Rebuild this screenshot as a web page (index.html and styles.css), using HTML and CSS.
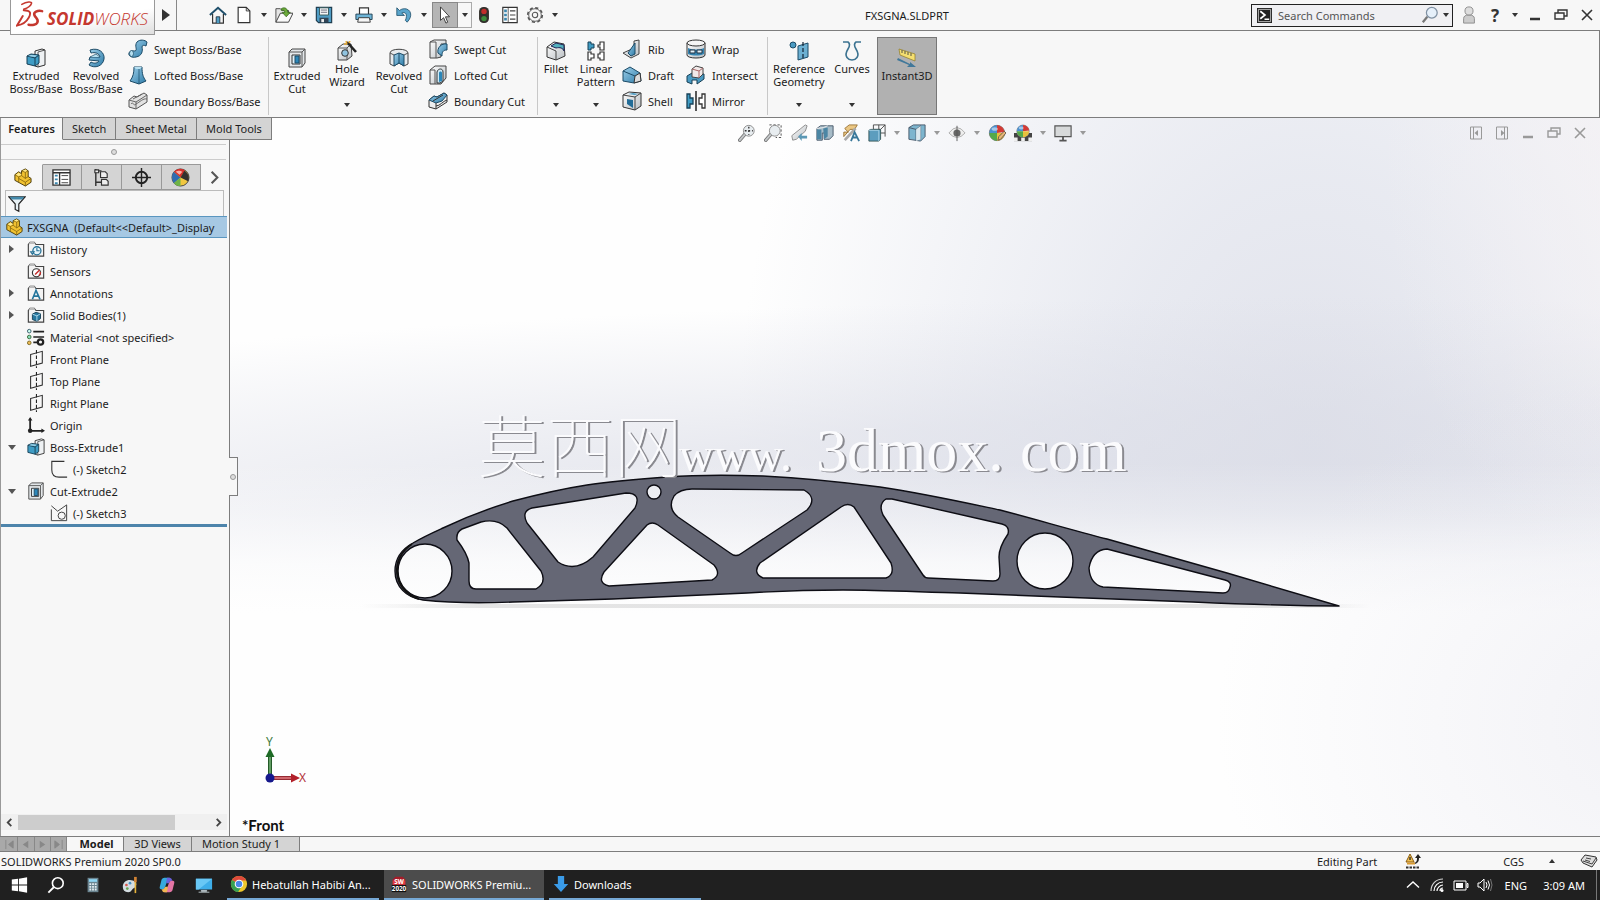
FILE: index.html
```html
<!DOCTYPE html>
<html lang="en">
<head>
<meta charset="utf-8">
<title>FXSGNA.SLDPRT - SOLIDWORKS Premium 2020</title>
<link rel="stylesheet" href="styles.css">
</head>
<body>
<svg class="defs" aria-hidden="true">
  <defs>
    <linearGradient id="blue" x1="0" y1="0" x2="1" y2="1"><stop offset="0" stop-color="#9fd0ea"/><stop offset="1" stop-color="#2c7ba8"/></linearGradient>
    <linearGradient id="steel" x1="0" y1="0" x2="1" y2="1"><stop offset="0" stop-color="#fff"/><stop offset="1" stop-color="#b9bec2"/></linearGradient>
    <symbol id="i-part" viewBox="0 0 20 20"><path d="M2 7 6 4l3 2V3l4-2 3 2v6l3 2v4l-6 4-11-6Z" fill="#f2c230" stroke="#4a3a08" stroke-linejoin="round"/><path d="m2 7 4 2.500L9 8V6M6 9.500V15M9 8l4 3V4.500L9 3M13 4.500 16 3M13 11l3-2M13 19v-4L6 11M13 15l6-4" fill="none" stroke="#7b5e0c" stroke-width=".8"/><path d="m3 7 3-2 3 2-3 1.500ZM10 3l3-1.500L15 3l-2 1Z" fill="#ffe98a"/></symbol>
    <symbol id="i-extrude" viewBox="0 0 20 20"><path d="M9 3 16 1l3 1v15l-7 2-3-1Z" fill="#eef1f3" stroke="#333"/><path d="M12 4v15M12 4l7-2" fill="none" stroke="#555"/><path d="m1 8 4-2 8 1v8l-4 3-8-2Z" fill="#3f9cc4" stroke="#173f55"/><path d="m1 8 8 2 4-3M9 10v8" fill="none" stroke="#173f55"/><path d="m2 8 3-1 6 .5L9 9Z" fill="#a5d6ea"/></symbol>
    <symbol id="i-excut" viewBox="0 0 20 20"><path d="M2 4 5 1h13v14l-3 4H2Z" fill="#e3e7ea" stroke="#444"/><path d="M2 4h13v15M15 4l3-3" fill="none" stroke="#555"/><path d="M5 7h8v9H5Z" fill="#dff0f8" stroke="#333"/><path d="m8 8 4 0v7H8Z" fill="#2c87b9" stroke="#1b4a66"/></symbol>
    <symbol id="i-folder" viewBox="0 0 20 20"><path d="M1.500 18V5l2-2.500H8L10 5h8.500v13Z" fill="#f3f3f3" stroke="#444" stroke-width="1.300"/><path d="M2 4.500 3.500 2H8l1 2.500Z" fill="#bbb"/></symbol>
    <symbol id="i-plane" viewBox="0 0 20 20"><path d="M4 5 17 1.500v13L4 18Z" fill="none" stroke="#333" stroke-width="1.200"/><path d="M10.500 0v20" stroke="#222" stroke-width="1.200" stroke-dasharray="4 2"/></symbol>
    <symbol id="i-lens" viewBox="0 0 20 20"><path d="m2 18 6-7" stroke="#777" stroke-width="4" stroke-linecap="round"/><path d="m2 18 6-7" stroke="#c4c8ca" stroke-width="2" stroke-linecap="round"/><circle cx="12" cy="7.500" r="6" fill="#e8edf0" stroke="#888"/></symbol>
    <symbol id="i-restore" viewBox="0 0 14 14"><path d="M4 4.500V2h9v6h-3M1 5h9v6H1Z" fill="none" stroke="currentColor" stroke-width="1.400"/></symbol>
    <symbol id="i-close" viewBox="0 0 14 14"><path d="m2 2 10 10M12 2 2 12" stroke="currentColor" stroke-width="1.600"/></symbol>
    <symbol id="i-min" viewBox="0 0 14 14"><path d="M2 11h10" stroke="currentColor" stroke-width="2.500"/></symbol>
    <symbol id="i-ball" viewBox="0 0 20 20"><circle cx="10" cy="10" r="8.500" fill="#eee" stroke="#666"/><path d="M10 10V1.500A8.500 8.500 0 0 0 1.500 10Z" fill="#4a90d0"/><path d="M10 10V1.500A8.500 8.500 0 0 1 18.500 9Z" fill="#d33a35"/><path d="M1.500 10a8.500 8.500 0 0 0 8.500 8.500V10Z" fill="#55a94a"/><path d="M10 10h8.500a8.500 8.500 0 0 1-8.500 8.500Z" fill="#e8c23c"/><ellipse cx="7.500" cy="5.500" rx="3.500" ry="2" fill="#fff" opacity=".5"/></symbol>
  </defs>
</svg>

<header class="titlebar">
  <div class="brand">
    <svg class="brand-mark" viewBox="0 0 30 30" aria-hidden="true"><g fill="none" stroke="#c5382f" stroke-linecap="round"><path d="M6 4c5-3 11-3 10-1-1 3-5 5-8 6" stroke-width="1.600"/><path d="M8 10c7 0 8 3 5 8-2 4-7 7-12 8l6-10" stroke-width="2"/><path d="M27 11c-5-1-9 1-8 4 1 3 5 4 3 8-1 2-5 3-9 2" stroke-width="2.600"/></g></svg>
    <span class="brand-name"><b>SOLID</b>WORKS</span>
  </div>
  <button class="menu-arrow" aria-label="Expand menu"></button>
  <nav class="quick" aria-label="Quick access">
    <button class="tool home" aria-label="Home"><svg viewBox="0 0 20 20"><path d="M4 9v10h12V9" fill="#f4f4f4" stroke="#333" stroke-width="1.300"/><path d="M1 10 10 2l9 8" fill="none" stroke="#1f4f6b" stroke-width="2.200"/><path d="M8 19v-7h4v7" fill="#4d9dc4" stroke="#234"/></svg></button>
    <button class="tool" aria-label="New"><svg viewBox="0 0 20 20"><path d="M3.500 1.500h9l4 4v13h-13Z" fill="#fff" stroke="#333" stroke-width="1.300"/><path d="M12.500 1.500v4h4" fill="none" stroke="#333"/></svg></button><button class="drop" aria-label="New options"></button>
    <button class="tool" aria-label="Open"><svg viewBox="0 0 20 20"><path d="M1 18V3h5l2 2h7v4" fill="#e6e6e6" stroke="#444"/><path d="m1 18 5-10h14l-5 10Z" fill="#fafafa" stroke="#333"/><path d="M7 3c3-2 7-1 7 4h3l-4.500 5L8 7h3c0-2-2-3-4-2Z" fill="#6cab3b" stroke="#2f5f17" stroke-width=".8"/></svg></button><button class="drop" aria-label="Open options"></button>
    <button class="tool" aria-label="Save"><svg viewBox="0 0 20 20"><path d="M1.500 1.500h17v17H4l-2.500-2.500Z" fill="#4f9cc4" stroke="#1f3d4f" stroke-width="1.300"/><path d="M5 2h10v8H5Z" fill="#f4f6f7" stroke="#355"/><path d="M6.500 4.500h7M6.500 7h7" stroke="#667"/><path d="M5 18v-5h10v5Z" fill="#345"/><path d="M7 14.500h3V18H7Z" fill="#eee"/></svg></button><button class="drop" aria-label="Save options"></button>
    <button class="tool" aria-label="Print"><svg viewBox="0 0 20 20"><path d="M5 9V2h10v7" fill="#fff" stroke="#333" stroke-width="1.300"/><path d="M1 9h18v6H1Z" fill="#6eb4d6" stroke="#1f3d4f"/><path d="M4 13h12l1 5H3Z" fill="#f6f6f6" stroke="#333"/></svg></button><button class="drop" aria-label="Print options"></button>
    <button class="tool" aria-label="Undo"><svg viewBox="0 0 20 20"><path d="M2 2v8.500h8.500L7.500 8c4-2 7 1 4 8l2 2c7-7 4-15-3-15-2 0-4 .8-5.500 2Z" fill="#5aa5cc" stroke="#1f4f6b" stroke-width=".9"/></svg></button><button class="drop" aria-label="Undo options"></button>
    <button class="tool select" aria-label="Select"><svg viewBox="0 0 20 20"><path d="M5 1v15l3.500-3 2.500 6 2-1-2.500-6H15Z" fill="#fff" stroke="#333"/></svg></button><button class="drop select-drop" aria-label="Select options"></button>
    <button class="tool" aria-label="Rebuild"><svg viewBox="0 0 20 20"><rect x="4.500" y="1" width="11" height="18" rx="5" fill="#32302c"/><circle cx="10" cy="6" r="3" fill="#c22d2a"/><circle cx="10" cy="14" r="3" fill="#3d8d3c"/></svg></button>
    <button class="tool list" aria-label="File properties"><svg viewBox="0 0 20 20"><path d="M2 1.500h16v17H2Z" fill="#fff" stroke="#333" stroke-width="1.300"/><path d="M8 2v16" stroke="#555"/><path d="M3.500 4h3v3h-3Zm0 4.500h3v3h-3Zm0 4.500h3v3h-3Z" fill="#3c87ae"/><path d="M10 5.500h6M10 10h6M10 14.500h6" stroke="#444" stroke-width="1.300"/></svg></button>
    <button class="tool" aria-label="Options"><svg viewBox="0 0 20 20"><circle cx="10" cy="10" r="8" fill="none" stroke="#555" stroke-width="2" stroke-dasharray="3.500 2.780"/><circle cx="10" cy="10" r="7" fill="#f7f7f7" stroke="#555"/><circle cx="10" cy="10" r="3" fill="none" stroke="#555" stroke-width="1.200"/></svg></button><button class="drop" aria-label="Options menu"></button>
  </nav>
  <h1 class="doc-title">FXSGNA.SLDPRT</h1>
  <div class="title-right">
    <label class="search">
      <svg viewBox="0 0 16 16" aria-hidden="true"><path d="M0 0h16v16H0Z" fill="#222"/><path d="M1.500 1.500h13v13h-13Z" fill="none" stroke="#ddd" stroke-width=".8"/><path d="m3.500 3.500 5 4-5 4M8 12h5" fill="none" stroke="#fff" stroke-width="1.800"/></svg>
      <input type="search" placeholder="Search Commands" aria-label="Search Commands">
      <svg class="glass" viewBox="0 0 20 20" aria-hidden="true"><path d="m2 18 5-6" stroke="#777" stroke-width="2.500"/><circle cx="12" cy="7.500" r="6" fill="#e6f0fa" stroke="#8091a3" stroke-width="1.400"/></svg>
      <button class="drop" aria-label="Search options"></button>
    </label>
    <button class="tool user" aria-label="Sign in"><svg viewBox="0 0 20 20"><path d="M4 19v-5q0-4 6-4t6 4v5Z" fill="#ccc" stroke="#888"/><circle cx="10" cy="5.500" r="4.500" fill="#ddd" stroke="#888"/></svg></button>
    <button class="help" aria-label="Help">?</button><button class="drop" aria-label="Help options"></button>
    <button class="win" aria-label="Minimize"><svg><use href="#i-min"/></svg></button>
    <button class="win" aria-label="Restore"><svg><use href="#i-restore"/></svg></button>
    <button class="win" aria-label="Close"><svg><use href="#i-close"/></svg></button>
  </div>
</header>

<section class="ribbon" aria-label="Features commands">
  <div class="group g-boss">
    <button class="big w60 low"><svg><use href="#i-extrude"/></svg><span>Extruded<br>Boss/Base</span></button>
    <button class="big w60 low"><svg viewBox="0 0 20 20"><path d="M4 2c9-3 15 3 14 9-1 7-9 10-15 6l2-3c3 2 7 1 8-1L3 12l1-3h10c-1-4-5-5-9-4Z" fill="url(#blue)" stroke="#1b4a66"/><path d="m4 9 6-3 4 3" fill="#b7e0f1" stroke="#1b4a66" stroke-width=".7"/></svg><span>Revolved<br>Boss/Base</span></button>
    <div class="stack">
      <button class="small"><svg viewBox="0 0 20 20"><path d="M9 3c3-3 8-2 10 0l-1 4c-2-1-4-1-4 1 1 4 0 9-6 10-4 1-8-1-7-4s5-2 6-2c3-1-1-5 2-9Z" fill="url(#blue)" stroke="#1b4a66"/><ellipse cx="3.500" cy="14.500" rx="2" ry="3" fill="#b7e0f1" stroke="#1b4a66" stroke-width=".7"/></svg>Swept Boss/Base</button>
      <button class="small"><svg viewBox="0 0 20 20"><path d="M6 2h8c0 7 1 10 4 14l-7 3-9-3C5 12 6 8 6 2Z" fill="url(#blue)" stroke="#1b4a66"/><path d="M6 2h8l-2 2H8Z" fill="#b7e0f1"/><path d="M11 4v15" stroke="#1b4a66" stroke-width=".7"/></svg>Lofted Boss/Base</button>
      <button class="small"><svg viewBox="0 0 20 20"><path d="M1 9 6 5l3 1 7-4 3 2v7L8 18l-7-2Z" fill="#e2e2e2" stroke="#555"/><path d="m1 9 7 2 11-7M8 11v7M5 8l9-5M3 13c2-3 3 3 5 0 4-2 7-6 11-5" fill="none" stroke="#666"/></svg>Boundary Boss/Base</button>
    </div>
  </div>
  <div class="group g-cut">
    <button class="big w50 low"><svg><use href="#i-excut"/></svg><span>Extruded<br>Cut</span></button>
    <button class="big w50 caret"><svg viewBox="0 0 20 20"><path d="m1 7 5-4h8l1 12-5 4H1Z" fill="url(#steel)" stroke="#444"/><path d="M1 7h9v12M10 7l4-4" fill="none" stroke="#555"/><circle cx="8" cy="12" r="3.300" fill="#8fc3df" stroke="#333"/><path d="m10 1 9 10" stroke="#222" stroke-width="2.600"/><path d="m9 0 1 3M13 0l-1 2M7 3l3 0" stroke="#e4a936" stroke-width="1.500"/></svg><span>Hole<br>Wizard</span></button>
    <button class="big w54 low"><svg viewBox="0 0 20 20"><path d="M1 5c0-5 18-5 18 0v11l-4 2-5-3-5 3-4-2Z" fill="#e6eaed" stroke="#444"/><path d="m5 7 5-2 5 2v11l-5-3-5 3Z" fill="url(#blue)" stroke="#1b4a66"/><path d="M10 5v10" stroke="#1b4a66"/><path d="m1 5 4 2M19 5l-4 2" stroke="#555"/></svg><span>Revolved<br>Cut</span></button>
    <div class="stack">
      <button class="small"><svg viewBox="0 0 20 20"><path d="m2 3 4-2h12v4h-5v13l-4 1H2Z" fill="url(#steel)" stroke="#444"/><path d="M2 3h6v16" fill="none" stroke="#555"/><path d="M19 5c-6-1-10 4-9 9l4 3c0-4 1-6 5-6Z" fill="url(#blue)" stroke="#1b4a66"/></svg>Swept Cut</button>
      <button class="small"><svg viewBox="0 0 20 20"><path d="m2 5 5-4h11v12l-5 6H2Z" fill="url(#steel)" stroke="#444"/><path d="M2 5h5v14" fill="none" stroke="#555"/><path d="M9 7c1-4 6-4 6 0v9l-3 2H9Z" fill="#cfe9f5" stroke="#333"/><path d="M11 8c0-2 3-2 3 0v8l-3 1Z" fill="#2c87b9"/></svg>Lofted Cut</button>
      <button class="small"><svg viewBox="0 0 20 20"><path d="M1 9 6 5l3 1 7-4 3 2v7L8 18l-7-2Z" fill="#eee" stroke="#333"/><path d="m1 9 5-4 3 1 7-4 3 2-5 6-6 2Z" fill="url(#blue)" stroke="#1b4a66"/><path d="M8 12v6M5 10l10-6M8 15c4 0 7-5 11-6" fill="none" stroke="#333"/></svg>Boundary Cut</button>
    </div>
  </div>
  <div class="group g-mod">
    <button class="big w36 caret"><svg viewBox="0 0 20 20"><path d="M1 6 8 1l10 2 1 12-9 4-9-3Z" fill="url(#steel)" stroke="#333"/><path d="M10 19V10L1 6" fill="none" stroke="#444"/><path d="m5 5 5-3 8 2v6c-1-3-4-4-8-3Z" fill="#53b0bd" stroke="#225"/></svg><span>Fillet</span></button>
    <button class="big w44 caret"><svg viewBox="0 0 20 20"><g fill="#fff" stroke="#333" stroke-width="1.200"><path d="M12 4h2V1h4v8h-4V6h-2ZM2 11h3v2h3v4H5v2H2ZM12 13h2v-2h4v8h-4v-2h-2Z"/></g><path d="M2 1h3v2h3v4H5v2H2Z" fill="#3f9cc4" stroke="#173f55"/></svg><span>Linear<br>Pattern</span></button>
    <div class="stack w64">
      <button class="small"><svg viewBox="0 0 20 20"><path d="m1 14 11-5V2l5-1v14l-8 4Z" fill="url(#steel)" stroke="#444"/><path d="m6 14 7-10v11l-4 2Z" fill="url(#blue)" stroke="#1b4a66"/></svg>Rib</button>
      <button class="small"><svg viewBox="0 0 20 20"><path d="m1 6 7-4 10 6 1 8-7 2-11-2Z" fill="url(#blue)" stroke="#1b4a66"/><path d="m12 18 1-7 5-3 1 8Z" fill="#ddd" stroke="#333"/><path d="m1 6 12 5" stroke="#1b4a66"/></svg>Draft</button>
      <button class="small"><svg viewBox="0 0 20 20"><path d="m1 4 6-3 12 1v13l-6 4-12-3Z" fill="url(#steel)" stroke="#333"/><path d="M13 19V6L1 4M13 6l6-4" fill="none" stroke="#444"/><path d="m5 8 6 1v8l-6-4Z" fill="#226c97"/><path d="m6 3 7 1 3-1-5-1Z" fill="#4d9dc4"/></svg>Shell</button>
    </div>
    <div class="stack">
      <button class="small"><svg viewBox="0 0 20 20"><path d="M1 4v12c0 4 18 4 18 0V4" fill="url(#steel)" stroke="#333"/><ellipse cx="10" cy="4" rx="9" ry="3" fill="#f6f6f6" stroke="#333"/><path d="M2 9c5 2 11 2 16 0v6c-5 2-11 2-16 0Z" fill="#3584b0"/><path d="M4 11h5v3H4ZM11 11h5v3h-5Z" fill="#e4f2f8" stroke="#234"/></svg>Wrap</button>
      <button class="small"><svg viewBox="0 0 20 20"><path d="M1 11 6 8l12 1v5l-7 5v-4H6v4l-5-2Z" fill="#4a9ac2" stroke="#173f55"/><path d="m6 4 4-3 7 2v6l-4 4-7-1Z" fill="#f1e9e9" stroke="#444"/><path d="m6 4 7 2 4-3M13 6v7" fill="none" stroke="#a66"/></svg>Intersect</button>
      <button class="small"><svg viewBox="0 0 20 20"><path d="M1 3h3v4h3v6H4v4H1Z" fill="#3f9cc4" stroke="#173f55" stroke-width="1.300"/><path d="M19 3h-3v4h-3v6h3v4h3Z" fill="#fff" stroke="#333" stroke-width="1.300"/><path d="M10 0v20" stroke="#222" stroke-width="1.500"/></svg>Mirror</button>
    </div>
  </div>
  <div class="group g-ref">
    <button class="big w62 caret"><svg viewBox="0 0 20 20"><circle cx="4" cy="4" r="3" fill="#4a9ac2" stroke="#1b4a66"/><path d="m9 5 10-3v14L9 19Z" fill="#6cb0d2" stroke="#1b4a66"/><path d="M14 1v18" stroke="#123" stroke-width="1.200" stroke-dasharray="4 2"/></svg><span>Reference<br>Geometry</span></button>
    <button class="big w44 caret"><svg viewBox="0 0 20 20"><path d="M1 1h5q3 2 0 7c-5 8 1 11 4 11s9-3 4-11q-3-5 0-7h5" fill="none" stroke="#3c7391" stroke-width="1.600"/></svg><span>Curves</span></button>
    <button class="big instant low" aria-pressed="true"><svg viewBox="0 0 20 20"><path d="m2 1 16 5v7L3 7Z" fill="#f5df71" stroke="#8d7924" stroke-width=".7"/><path d="M5 2v3M8 3v3M11 4v3M14 5v3" stroke="#554"/><path d="m1 10 12 6v-2l6 5h-9l2-2L0 12Z" fill="#41789a"/></svg><span>Instant3D</span></button>
  </div>
</section>

<main class="work">
  <aside class="side">
    <nav class="cmd-tabs" aria-label="Command tabs">
      <button class="cmd on">Features</button><button class="cmd">Sketch</button><button class="cmd">Sheet Metal</button><button class="cmd">Mold Tools</button>
    </nav>
    <div class="grip"><i></i></div>
    <nav class="mgr" aria-label="Manager tabs">
      <button class="on" aria-label="Feature tree"><svg><use href="#i-part"/></svg></button>
      <button aria-label="Property manager"><svg viewBox="0 0 20 20"><path d="M1 2h18v16H1Z" fill="#fff" stroke="#333" stroke-width="1.400"/><path d="M1 5h18M8 5v13" stroke="#333" stroke-width="1.400"/><path d="M3 7h3v2H3Zm0 4h3v2H3Zm0 4h3v2H3Z" fill="#3c87ae"/><path d="M10 8h7M10 12h7M10 15.500h7" stroke="#444"/></svg></button>
      <button aria-label="Configurations"><svg viewBox="0 0 20 20"><path d="M4 1v18M4 3h6M4 15h6" fill="none" stroke="#333" stroke-width="1.500"/><path d="M3 2h4v3H3ZM9 4h5l2 2v4H9ZM10 12h5l2 2v4h-7Z" fill="#eee" stroke="#333" stroke-width="1.200"/></svg></button>
      <button aria-label="Dimensions"><svg viewBox="0 0 20 20"><circle cx="10" cy="10" r="6" fill="none" stroke="#222" stroke-width="2"/><path d="M10 0v20M0 10h20" stroke="#222" stroke-width="1.500"/></svg></button>
      <button aria-label="Display manager"><svg viewBox="0 0 20 20"><circle cx="10" cy="10" r="9" fill="#f1c740" stroke="#444"/><path d="M10 10 3 4c-3 4-2 9 0 12Z" fill="#2e6cb2"/><path d="M10 10 3 4c4-4 9-4 12-1Z" fill="#d6302c"/><path d="m10 10 4-7c4 2 6 7 4 11Z" fill="#32302f"/><path d="m10 10-7 6c2 2 4 3 7 3Z" fill="#6eb348"/><path d="M5 4c3-2 5-1 7 0l-3 3Z" fill="#f9b0a6"/></svg></button>
      <button class="more" aria-label="More tabs"><svg viewBox="0 0 20 20"><path d="m7 4 6 6-6 6" fill="none" stroke="#555" stroke-width="2.200"/></svg></button>
    </nav>
    <label class="filter"><svg viewBox="0 0 20 20" aria-hidden="true"><path d="M1 2h18l-7 8v8l-4-2v-6Z" fill="#e8f1f5" stroke="#222" stroke-width="1.300"/><path d="M2 2h16l-2 3H4Z" fill="#4288a9"/></svg><input type="text" aria-label="Filter tree"></label>
    <div class="tree">
      <div class="row root"><svg><use href="#i-part"/></svg><span>FXSGNA&nbsp; (Default&lt;&lt;Default&gt;_Display</span></div>
      <ul>
        <li class="row"><button class="tw" aria-label="Expand"></button><svg viewBox="0 0 20 20"><use href="#i-folder"/><circle cx="11" cy="12" r="4.500" fill="#e5f4fa" stroke="#277297" stroke-width="1.400"/><path d="M11 9v3h3M4 13h4l-2 3Z" fill="none" stroke="#277297" stroke-width="1.200"/></svg><span>History</span></li>
        <li class="row"><i class="tw-gap"></i><svg viewBox="0 0 20 20"><use href="#i-folder"/><circle cx="10.500" cy="12" r="4.500" fill="#fff" stroke="#333" stroke-width="1.300"/><path d="m9 14 5-5" stroke="#c62e2b" stroke-width="1.600"/><path d="M13 15c2-1 2-3 2-4" stroke="#c62e2b" fill="none" stroke-width="1.500"/></svg><span>Sensors</span></li>
        <li class="row"><button class="tw" aria-label="Expand"></button><svg viewBox="0 0 20 20"><use href="#i-folder"/><path d="m6 17 4-10 4.500 10M7.500 13.500h5" fill="none" stroke="#24759c" stroke-width="1.800"/></svg><span>Annotations</span></li>
        <li class="row"><button class="tw" aria-label="Expand"></button><svg viewBox="0 0 20 20"><use href="#i-folder"/><path d="m6 9 4-2 5 1.500V14l-4 3-5-2Z" fill="#26779f" stroke="#173f55"/><path d="m6 9 5 2 4-2.500M11 11v6" stroke="#b7e0f1" fill="none"/></svg><span>Solid Bodies(1)</span></li>
        <li class="row"><i class="tw-gap"></i><svg viewBox="0 0 20 20"><path d="M7 4h12M7 10h12M7 16h5" stroke="#222" stroke-width="1.800"/><circle cx="2.500" cy="3.500" r="2" fill="#cfe" stroke="#356"/><circle cx="2.500" cy="10" r="2" fill="#8db" stroke="#363"/><circle cx="2.500" cy="16.500" r="2" fill="#eb5" stroke="#762"/><circle cx="15" cy="15.500" r="3" fill="none" stroke="#222" stroke-width="2.500"/></svg><span>Material &lt;not specified&gt;</span></li>
        <li class="row"><i class="tw-gap"></i><svg><use href="#i-plane"/></svg><span>Front Plane</span></li>
        <li class="row"><i class="tw-gap"></i><svg><use href="#i-plane"/></svg><span>Top Plane</span></li>
        <li class="row"><i class="tw-gap"></i><svg><use href="#i-plane"/></svg><span>Right Plane</span></li>
        <li class="row"><i class="tw-gap"></i><svg viewBox="0 0 20 20"><path d="M3.500 3v13.500H17" fill="none" stroke="#222" stroke-width="2"/><path d="M1 5l2.500-4L6 5ZM16 14l4 2.500-4 2.500Z" fill="#222"/><circle cx="3.500" cy="16.500" r="2.500" fill="#222"/></svg><span>Origin</span></li>
        <li class="row"><button class="tw open" aria-label="Collapse"></button><svg><use href="#i-extrude"/></svg><span>Boss-Extrude1</span></li>
        <li class="row child"><svg viewBox="0 0 20 20"><path d="M16 1.500H2V11q0 8 8 8h9" fill="none" stroke="#333" stroke-width="1.200"/></svg><span>(-) Sketch2</span></li>
        <li class="row"><button class="tw open" aria-label="Collapse"></button><svg><use href="#i-excut"/></svg><span>Cut-Extrude2</span></li>
        <li class="row child"><svg viewBox="0 0 20 20"><path d="M1.500 6v12.500h17V1l-10 7-7-6" fill="none" stroke="#444" stroke-width="1.100"/><circle cx="13" cy="13" r="4" fill="none" stroke="#444" stroke-width="1.100"/></svg><span>(-) Sketch3</span></li>
      </ul>
      <div class="rollback"></div>
    </div>
    <div class="hscroll"><button aria-label="Scroll left"><svg viewBox="0 0 10 10"><path d="M7 1 3 5l4 4" fill="none" stroke="#444" stroke-width="2"/></svg></button><div class="track"><div class="thumb"></div></div><button aria-label="Scroll right"><svg viewBox="0 0 10 10"><path d="m3 1 4 4-4 4" fill="none" stroke="#444" stroke-width="2"/></svg></button></div>
    <button class="splitter" aria-label="Collapse panel"><i></i></button>
  </aside>

  <section class="view" aria-label="Graphics area">
    <svg class="scene" viewBox="230 118 1370 718" preserveAspectRatio="xMidYMid slice" role="img" aria-label="Wing rib part">
      <defs>
        <linearGradient id="floor" x1="0" x2="1"><stop offset="0" stop-color="#ccc" stop-opacity="0"/><stop offset=".12" stop-color="#ccc" stop-opacity=".5"/><stop offset=".9" stop-color="#ccc" stop-opacity=".5"/><stop offset="1" stop-color="#ccc" stop-opacity="0"/></linearGradient>
      </defs>
      <rect x="360" y="604" width="1010" height="4" fill="url(#floor)"/>
      <path class="rib" fill-rule="evenodd" d="M395 571C395 558 402 549 413 543C423 537 432 533 443 528C466 517 490 508 513 501C536 495 561 489 587 485C613 481 640 479 667 477C695 475 730 475 763 476C802 478 842 482 880 487C921 493 962 502 1000 510C1038 520 1072 530 1107 539L1227 573L1339 606C1310 606 1240 604 1193 602L1060 597L960 593C920 592 880 590 843 590C810 590 780 591 747 593L613 599L513 602C490 603 450 603 423 600C406 598 395 586 395 571Z
        M398 571a27 27 0 1 0 54 0a27 27 0 1 0-54 0Z
        M457 540Q456 532 462 529L481 522Q497 518 507 528L541 571Q547 583 536 589H476Q469 589 469 581V563Q467 553 457 540Z
        M527 523Q521 511 532 508L626 493Q642 493 635 508L593 557Q575 573 558 562Z
        M647 525Q652 521 658 525L714 565Q722 575 712 580L609 586Q597 583 604 572Z
        M647 492a7 7 0 1 0 14 0a7 7 0 1 0-14 0Z
        M678 517Q667 508 674 496Q680 489 692 489L804 490Q818 498 807 510L742 553Q736 558 730 553Z
        M760 563L841 507Q848 502 854 507L891 563Q895 575 886 578L763 578Q752 573 760 563Z
        M883 515Q878 504 886 499L892 499L1002 524Q1010 526 1008 534Q999 547 999 557L1000 574Q1000 581 993 581L928 578Q925 578 923 575Z
        M1017 561a28 28 0 1 0 56 0a28 28 0 1 0-56 0Z
        M1107 549L1225 580Q1232 582 1230 587Q1229 593 1223 593L1103 587Q1090 584 1089 568Q1092 550 1107 549Z"/>
      <path d="M412 544C390 558 392 590 419 599" fill="none" stroke="#111" stroke-width="2"/>
      <g class="mark"><text x="478" y="472" class="mark-cjk">莫西网</text><text y="471" class="mark-latin"><tspan x="679" class="mark-www">www.</tspan><tspan x="816">3dmox.</tspan><tspan x="1020">com</tspan></text></g>
    </svg>
    <nav class="hud" aria-label="View tools">
      <button class="tool" aria-label="Zoom to fit"><svg viewBox="0 0 20 20"><use href="#i-lens"/><path d="M12 3v9M7.500 7.500h9" stroke="#333" stroke-width="1.500" stroke-dasharray="2 2"/></svg></button>
      <button class="tool" aria-label="Zoom to area"><svg viewBox="0 0 20 20"><path d="M6 1h13v14h-6" fill="none" stroke="#444" stroke-dasharray="2.500 2"/><use href="#i-lens"/></svg></button>
      <button class="tool" aria-label="Previous view"><svg viewBox="0 0 20 20"><path d="m2 13 10-8 5-4 2 1-2 6-10 9-4 1Z" fill="url(#steel)" stroke="#888"/><path d="m9 14 4-4v3h6v3h-6v3Z" fill="#5b98b5"/></svg></button>
      <button class="tool" aria-label="Section view"><svg viewBox="0 0 20 20"><path d="m1 5 4-3h14v11l-4 4H9v-7H7v8H1Z" fill="#a7bcc8" stroke="#456"/><path d="m8 5 5-1v10l-4 3ZM1 6h5v11H1Z" fill="#4b86a4"/><path d="m1 5 7-1 5-2" stroke="#eee" fill="none"/></svg></button>
      <button class="tool" aria-label="Dynamic annotation"><svg viewBox="0 0 20 20"><path d="m3 5 5-4h9l-3 5H9l-7 8V9h5Z" fill="#ebc783" stroke="#997235"/><path d="m3 18 12-13" stroke="#aaa" stroke-width="3"/><path d="m10 19 4-10 5 10M11 15h6" fill="none" stroke="#387799" stroke-width="2"/></svg></button>
      <button class="tool" aria-label="View orientation"><svg viewBox="0 0 20 20"><path d="M6 1h13v13M6 1v5M19 1l-5 5M12 1v6M6 6h8M14 10h5" fill="none" stroke="#444"/><path d="m1 7 2-1h11v11l-2 2H1Z" fill="#5c9dbe" stroke="#355"/><path d="M1 7h11v12" fill="none" stroke="#a7d3e6"/></svg></button><button class="drop soft" aria-label="Orientation options"></button>
      <button class="tool" aria-label="Display style"><svg viewBox="0 0 20 20"><path d="m1 4 5-3h13v13l-5 5-13-2Z" fill="#7db5ce" stroke="#456"/><path d="m1 4 8 2v12M9 6l5-4v15" fill="none" stroke="#456"/><path d="m9 6 5-4v15l-5 2Z" fill="#dbe8ee"/></svg></button><button class="drop soft" aria-label="Display options"></button>
      <button class="tool" aria-label="Hide or show items"><svg viewBox="0 0 20 20"><path d="M1 10q9-12 18 0-9 10-18 0Z" fill="#eee" stroke="#aaa"/><circle cx="10" cy="10" r="4" fill="#666"/><path d="M10 2v17" stroke="#555"/></svg></button><button class="drop soft" aria-label="Visibility options"></button>
      <button class="tool" aria-label="Edit appearance"><svg viewBox="0 0 20 20"><use href="#i-ball"/><path d="m11 18 1-4 6-6 2 2-6 7Z" fill="#e8b778" stroke="#654"/></svg></button>
      <button class="tool" aria-label="Apply scene"><svg viewBox="0 0 20 20"><path d="M0 10h20v9H0Z" fill="#444"/><path d="M0 15h4v4H0ZM8 15h4v4H8ZM16 15h4v4h-4Z" fill="#eee"/><use href="#i-ball" x="2" y="0" width="16" height="16"/></svg></button><button class="drop soft" aria-label="Scene options"></button>
      <button class="tool" aria-label="View settings"><svg viewBox="0 0 20 20"><path d="M1 2h18v12H1Z" fill="#d7d9da" stroke="#555" stroke-width="1.300"/><path d="M10 14v4M6 18.500h8" stroke="#555" stroke-width="2"/></svg></button><button class="drop soft" aria-label="Settings options"></button>
    </nav>
    <div class="docwin">
      <button class="win" aria-label="Previous pane"><svg viewBox="0 0 14 14"><path d="M1.500 1h11v12h-11Z" fill="none" stroke="currentColor"/><path d="M4.500 1v12" stroke="currentColor"/><path d="M9 4v6L5.500 7Z" fill="currentColor"/></svg></button>
      <button class="win" aria-label="Next pane"><svg viewBox="0 0 14 14"><path d="M1.500 1h11v12h-11Z" fill="none" stroke="currentColor"/><path d="M9.500 1v12" stroke="currentColor"/><path d="M6 4v6l3.500-3Z" fill="currentColor"/></svg></button>
      <button class="win" aria-label="Minimize document"><svg><use href="#i-min"/></svg></button>
      <button class="win" aria-label="Restore document"><svg><use href="#i-restore"/></svg></button>
      <button class="win" aria-label="Close document"><svg><use href="#i-close"/></svg></button>
    </div>
    <div class="triad">
      <svg viewBox="0 0 50 50" aria-hidden="true"><path d="M10 40V14" stroke="#245a28" stroke-width="4"/><path d="M10 38V14" stroke="#76b577" stroke-width="1.500"/><path d="m5.500 17 4.500-9 4.500 9Z" fill="#1d6a25"/><path d="M12 38h20" stroke="#952a32" stroke-width="4"/><path d="M14 38h18" stroke="#e37b80" stroke-width="1.500"/><path d="m31 33.500 9 4.500-9 4.500Z" fill="#b2202a"/><circle cx="10" cy="38" r="4.500" fill="#16188c"/></svg>
      <span class="ax-y">Y</span><span class="ax-x">X</span>
    </div>
    <div class="view-name">*Front</div>
  </section>
</main>

<nav class="sheets" aria-label="Model tabs">
  <div class="steps">
    <button aria-label="First"><svg viewBox="0 0 12 12"><path d="M2 1v10M10 2 5 6l5 4Z" stroke="#888" fill="#888"/></svg></button><button aria-label="Previous"><svg viewBox="0 0 12 12"><path d="M9 2 3 6l6 4Z" fill="#888"/></svg></button><button aria-label="Next"><svg viewBox="0 0 12 12"><path d="m3 2 6 4-6 4Z" fill="#888"/></svg></button><button aria-label="Last"><svg viewBox="0 0 12 12"><path d="M10 1v10M2 2l5 4-5 4Z" stroke="#888" fill="#888"/></svg></button>
  </div>
  <button class="sheet on">Model</button><button class="sheet s3d">3D Views</button><button class="sheet smo">Motion Study 1</button>
</nav>

<footer class="status">
  <span class="product">SOLIDWORKS Premium 2020 SP0.0</span>
  <span class="mode">Editing Part</span>
  <svg class="rebuild" viewBox="0 0 16 16" aria-hidden="true"><path d="m1 9 4-8 4 8Z" fill="#f1c153" stroke="#8a5d12"/><path d="M5 4v3" stroke="#222" stroke-width="1.300"/><path d="M8 10c4 0 4-3 4-5h-2l3-4 3 4h-2c0 4-2 6-6 6Z" fill="#222"/><path d="M2 10.500h8" stroke="#d99b33" stroke-width="2"/><path d="M1 14.500h13" stroke="#333" stroke-width="2" stroke-dasharray="2.500 1"/></svg>
  <button class="units">CGS<i></i></button>
  <svg class="tag" viewBox="0 0 18 16" aria-hidden="true"><path d="M1 7 5 2l11 2 1 3-5 7-9-4Z" fill="#ddd" stroke="#333"/><path d="m3 8 9 3 4-6M6 5l5 1M5 7l5 1.500" fill="none" stroke="#444"/></svg>
</footer>

<nav class="taskbar" aria-label="Taskbar">
  <button class="tb" aria-label="Start"><svg viewBox="0 0 20 20"><path d="m2 4 7-1v6.500H2ZM10 3l9-1.500v8h-9ZM2 10.500h7V17l-7-1ZM10 10.500h9v8L10 17Z" fill="#fff"/></svg></button>
  <button class="tb" aria-label="Search"><svg viewBox="0 0 20 20"><circle cx="12" cy="8" r="6" fill="none" stroke="#fff" stroke-width="1.800"/><path d="m7.500 12.500-6 6" stroke="#fff" stroke-width="2"/></svg></button>
  <button class="tb" aria-label="Calculator"><svg viewBox="0 0 20 20"><path d="M4 2h12v16H4Z" fill="#6b8591"/><path d="M5.500 3.500h9v3h-9Z" fill="#8ed5f3"/><path d="M6 9h8M6 12h8M6 15h8" stroke="#e4edf2" stroke-width="2" stroke-dasharray="2 1"/></svg></button>
  <button class="tb" aria-label="Paint"><svg viewBox="0 0 20 20"><path d="M2 12C2 6 8 3 13 5c5 1 5 6 2 8-3 1-3 5-7 5s-6-2-6-6Z" fill="#d4dde1"/><circle cx="6" cy="10" r="1.500" fill="#d6574c"/><circle cx="10" cy="8" r="1.500" fill="#4690c5"/><circle cx="7" cy="14" r="1.500" fill="#68a652"/><path d="M16 1v6" stroke="#d28334" stroke-width="3"/><path d="M16 7v12" stroke="#e7b33b" stroke-width="1.800"/></svg></button>
  <button class="tb" aria-label="Copilot"><svg viewBox="0 0 20 20"><path d="M2 12 4 4q1-2 3-2h6q-2 1-3 4l-2 6q-1 3-3 3-4 0-3-3Z" fill="#36a9dd"/><path d="m18 8-2 8q-1 2-3 2H7q2-1 3-4l2-6q1-3 3-3 4 0 3 3Z" fill="#e575a4"/><path d="M10 2h3q2 0 3 3-3 0-4 3H9Z" fill="#6b60dc"/><path d="M10 18H7q-2 0-3-3 3 0 4-3h3Z" fill="#f1b653"/></svg></button>
  <button class="tb" aria-label="This PC"><svg viewBox="0 0 20 20"><path d="M1 3h18v12H1Z" fill="#3eaee9"/><path d="m1 3h18L4 15H1Z" fill="#69c8f5"/><path d="M7 16h6v1H7ZM4 18h12" fill="#ccc" stroke="#bcc8ce"/></svg></button>
  <button class="task chrome"><svg viewBox="0 0 20 20"><circle cx="10" cy="10" r="9" fill="#eec72c"/><path d="M10 10 2.200 5.500A9 9 0 0 1 18 6h-8Z" fill="#df4a3b"/><path d="m10 10-7.800-4.500A9 9 0 0 0 9 19l4.500-7Z" fill="#38a052"/><circle cx="10" cy="10" r="4.800" fill="#fff"/><circle cx="10" cy="10" r="3.600" fill="#4a88e8"/></svg>Hebatullah Habibi An...</button>
  <button class="task active"><svg viewBox="0 0 20 20"><path d="m3 5 3-3h8l3 3v6H3Z" fill="#a71c28"/><path d="M3 6h14v5H3Z" fill="#df3941"/><path d="M2 11h16v8H2Z" fill="#111"/><text x="10" y="10.500" class="sw-tiny">SW</text><text x="10" y="18" class="sw-tiny">2020</text></svg>SOLIDWORKS Premiu...</button>
  <button class="task downloads"><svg viewBox="0 0 20 20"><path d="M6.500 1h7v9H18l-8 9-8-9h4.500Z" fill="#3a9be8"/></svg>Downloads</button>
  <div class="tray">
    <button aria-label="Hidden icons"><svg viewBox="0 0 16 16"><path d="m2 10.500 6-5.500 6 5.500" fill="none" stroke="#fff" stroke-width="1.400"/></svg></button>
    <button aria-label="Network"><svg viewBox="0 0 16 16"><g fill="none" stroke="#fff" stroke-width="1.200"><path d="M2 14C2 7 7 2 14 2" opacity=".8"/><path d="M5 14c0-5 4-9 9-9M8 14c0-3 3-6 6-6M11 14c0-2 1-3 3-3"/></g><circle cx="13" cy="13.500" r="1.500" fill="#fff"/></svg></button>
    <button aria-label="Battery"><svg viewBox="0 0 16 16"><path d="M1 4h12v9H1ZM14 6.500h1v4h-1Z" fill="none" stroke="#fff"/><path d="M3 6h7v5H3Z" fill="#fff"/></svg></button>
    <button aria-label="Volume"><svg viewBox="0 0 16 16"><path d="M1 6h2l4-4v12l-4-4H1Z" fill="none" stroke="#fff"/><path d="M9 5q2 3 0 6M11 3.500q3 4.500 0 9" fill="none" stroke="#fff"/><path d="M13.500 2q3 6 0 12" fill="none" stroke="#777"/></svg></button>
    <button class="lang">ENG</button>
    <time class="clock">3:09 AM</time>
    <i class="edge"></i>
  </div>
</nav>
</body>
</html>
```

FILE: styles.css
```css
* { box-sizing: border-box; }

:root {
  --chrome: #f7f7f7;
  --line: #7d7d7d;
  --tab: #d4d4d4;
  --ink: #1c1c1c;
}

html, body { height: 100%; }

body {
  margin: 0;
  display: flex;
  flex-direction: column;
  overflow: hidden;
  background: var(--chrome);
  color: var(--ink);
  font-family: "Noto Sans", "Open Sans", "Noto Sans CJK SC", sans-serif;
  font-size: 11px;
  line-height: 13px;
}

button, input {
  font: inherit;
  color: inherit;
  background: none;
  border: 0;
  padding: 0;
  margin: 0;
}

svg { display: block; flex: none; }
.defs { position: absolute; width: 0; height: 0; }

/* title bar */
.titlebar {
  display: flex;
  align-items: center;
  flex: none;
  height: 31px;
  border-bottom: 1px solid var(--line);
  position: relative;
  z-index: 2;
}

.brand {
  display: flex;
  align-items: center;
  gap: 2px;
  width: 145px;
  height: 35px;
  margin-left: 10px;
  padding-left: 5px;
  align-self: flex-start;
  border: 1px solid #999;
  border-top: 0;
  background: linear-gradient(170deg, #fff 55%, #dedede);
}
.brand-mark { width: 29px; height: 30px; align-self: flex-start; }
.brand-name {
  color: #c5382f;
  font-family: "Open Sans", sans-serif;
  font-size: 17px;
  font-style: italic;
  font-weight: 300;
  line-height: 20px;
  padding-top: 4px;
}
.brand-name b { font-weight: 700; }

.menu-arrow {
  width: 22px;
  height: 30px;
  display: grid;
  place-items: center;
  border-right: 1px solid #888;
}
.menu-arrow::before {
  content: "";
  border-left: 8px solid #333;
  border-top: 6px solid transparent;
  border-bottom: 6px solid transparent;
}

.quick { display: flex; align-items: center; margin-left: 29px; }
.tool { width: 24px; height: 26px; display: grid; place-items: center; flex: none; }
.tool svg { width: 18px; height: 18px; }
.home { margin-right: 2px; }
.list { margin: 0 1px 0 2px; }
.select { width: 26px; background: #b5b5b5; border: 1px solid #888; }
.select-drop.drop { width: 14px; height: 26px; border: 1px solid #aaa; border-left: 0; }

.drop { width: 16px; height: 20px; display: grid; place-items: center; flex: none; }
.drop::before {
  content: "";
  border-top: 4px solid #333;
  border-left: 3px solid transparent;
  border-right: 3px solid transparent;
}
.soft::before { border-top-color: #999; }

.doc-title { flex: 1; margin: 0; text-align: center; font-size: 11px; font-weight: 400; }

.title-right { display: flex; align-items: center; }
.search {
  display: flex;
  align-items: center;
  width: 202px;
  height: 23px;
  padding-left: 5px;
  border: 1px solid #222;
  background: #f0f0f3;
  margin-right: 5px;
}
.search svg { width: 15px; height: 15px; }
.search input { flex: 1; min-width: 0; margin-left: 6px; outline: 0; }
.search input::placeholder { color: #555; opacity: 1; }
.search .glass { width: 18px; height: 18px; }
.search .drop { width: 13px; }
.user { width: 22px; }
.help { width: 30px; font-size: 17px; font-weight: 700; color: #333; }
.title-right > .drop { width: 10px; }
.win { width: 26px; height: 20px; display: grid; place-items: center; color: #333; }
.win svg { width: 14px; height: 14px; }
.help + .drop + .win { margin-left: 2px; }

/* ribbon */
.ribbon {
  display: flex;
  flex: none;
  height: 87px;
  padding: 6px 0 2px;
  border-bottom: 1px solid var(--line);
  border-right: 1px solid var(--line);
}
.group { display: flex; border-right: 1px solid #c8c8c8; }
.g-boss { width: 269px; padding-left: 6px; }
.g-cut { width: 269px; padding-left: 3px; }
.g-mod { width: 230px; }
.g-ref { border: 0; }

.big {
  display: flex;
  flex-direction: column;
  align-items: center;
  gap: 1px;
  padding-top: 4px;
  position: relative;
  flex: none;
}
.big svg { width: 20px; height: 20px; }
.low { padding-top: 11px; }
.w36 { width: 36px; }
.w44 { width: 44px; }
.w50 { width: 50px; }
.w54 { width: 54px; }
.w60 { width: 60px; }
.w62 { width: 62px; }
.caret::after {
  content: "";
  margin-top: auto;
  margin-bottom: 8px;
  border-top: 4px solid #333;
  border-left: 3px solid transparent;
  border-right: 3px solid transparent;
}
.instant { width: 60px; margin-left: 3px; padding-top: 10px; background: #b1b1b1; border: 1px solid #777; }

.stack { display: flex; flex-direction: column; margin-top: -1px; padding-left: 2px; }
.g-mod .stack { padding-left: 4px; }
.w64 { width: 64px; }
.small {
  display: flex;
  align-items: center;
  gap: 6px;
  height: 26px;
  white-space: nowrap;
}
.small svg { width: 20px; height: 20px; }

/* work area */
.work { display: flex; flex: 1; min-height: 0; }
.side {
  display: flex;
  flex-direction: column;
  flex: none;
  width: 230px;
  border-left: 1px solid #999;
  border-right: 1px solid var(--line);
  position: relative;
  z-index: 1;
}

.cmd-tabs { display: flex; width: 271px; height: 22px; flex: none; }
.cmd {
  flex: 1 0 auto;
  padding: 0 7px;
  background: var(--tab);
  border: 1px solid var(--line);
  border-width: 0 1px 1px 0;
}
.cmd.on { padding: 0 5px; background: var(--chrome); border-bottom-color: var(--chrome); font-weight: 600; }

.grip {
  height: 16px;
  margin: 4px 3px 4px 0;
  flex: none;
  border: 1px solid #ccc;
  border-width: 1px 0;
  display: grid;
  place-items: center;
}
.grip i, .splitter i { width: 6px; height: 6px; border: 1px solid #999; border-radius: 50%; background: #ddd; }

.mgr { display: flex; height: 26px; flex: none; padding-left: 2px; }
.mgr button {
  width: 40px;
  display: grid;
  place-items: center;
  background: var(--tab);
  border: 1px solid #999;
  border-left: 0;
}
.mgr svg { width: 19px; height: 19px; }
.mgr .on { background: var(--chrome); border-color: transparent #999 transparent transparent; }
.mgr .more { width: 28px; background: none; border-color: transparent; }

.filter {
  display: flex;
  align-items: center;
  height: 26px;
  flex: none;
  margin: 0 5px 0 4px;
  padding-left: 2px;
  border: 1px solid #bbb;
  border-width: 1px 1px 0;
}
.filter svg { width: 18px; height: 18px; }
.filter input { flex: 1; min-width: 0; outline: 0; }

.tree { flex: 1; min-height: 0; overflow: hidden; margin-right: 2px; }
.tree ul { list-style: none; margin: 0; padding: 0; }
.row { display: flex; align-items: center; height: 22px; padding-left: 4px; white-space: nowrap; }
.row svg { width: 18px; height: 18px; margin-right: 5px; }
.root { background: #a6c8e3; border: 1px solid #5a96c0; border-width: 1px 0; }
.root svg { margin-right: 4px; }
.child { padding-left: 49px; }
.tw, .tw-gap { width: 22px; height: 16px; flex: none; }
.tw::before {
  content: "";
  display: block;
  width: 0;
  margin-left: 4px;
  border-left: 5px solid #555;
  border-top: 4px solid transparent;
  border-bottom: 4px solid transparent;
}
.tw.open::before {
  margin-left: 3px;
  border-top: 5px solid #555;
  border-left: 4px solid transparent;
  border-right: 4px solid transparent;
  border-bottom: 0;
}
.rollback { height: 3px; background: #4d84ab; }

.hscroll { display: flex; align-items: center; height: 16px; flex: none; margin: 0 2px 6px 0; background: #f0f0f0; }
.hscroll button { width: 17px; height: 16px; display: grid; place-items: center; }
.hscroll svg { width: 9px; height: 9px; }
.track { flex: 1; height: 15px; }
.thumb { width: 82%; height: 100%; background: #cdcdcd; }

.splitter {
  position: absolute;
  right: -9px;
  top: 339px;
  width: 9px;
  height: 39px;
  display: grid;
  place-items: center;
  background: var(--chrome);
  border: 1px solid var(--line);
  border-left: 0;
}

/* graphics area */
.view {
  flex: 1;
  min-width: 0;
  position: relative;
  background:
    radial-gradient(ellipse 34% 50% at 106% 84%, rgba(236, 236, 242, .7), rgba(236, 236, 242, 0)),
    linear-gradient(rgba(254, 254, 254, 0) 48%, rgba(254, 254, 254, .3) 55%, rgba(254, 254, 254, .78) 62%, #fefefe 69%),
    radial-gradient(ellipse 20% 62% at 104% 4%, rgba(243, 240, 243, .8), rgba(243, 240, 243, 0)),
    radial-gradient(ellipse 130% 30% at 79% 55%, rgba(219, 221, 231, .8), rgba(219, 221, 231, .6) 45%, rgba(219, 221, 231, 0)),
    radial-gradient(ellipse 42% 110% at 79% 46%, rgba(217, 219, 230, .8), rgba(219, 222, 233, .62) 35%, rgba(219, 222, 233, 0)),
    #fefefe;
}
.scene { position: absolute; inset: 0; width: 100%; height: 100%; }
.rib { fill: #656775; stroke: #0d0d14; stroke-width: 1.4; stroke-linejoin: round; }
.mark { fill: #fbfbfd; filter: drop-shadow(2px 1px 0 #8a8a90); }
.mark-cjk { font-family: "Noto Sans CJK SC", sans-serif; font-size: 68px; font-weight: 100; }
.mark-latin { font-family: "Liberation Serif", serif; font-size: 62px; }
.mark-www { font-size: 48px; }

.hud { position: absolute; top: 2px; left: 504px; display: flex; align-items: center; }
.hud .tool { width: 26px; }
.hud .drop { width: 14px; }
.docwin { position: absolute; top: 5px; right: 7px; display: flex; }
.docwin .win { color: #999; }

.triad { position: absolute; left: 30px; bottom: 46px; width: 50px; height: 50px; }
.ax-y, .ax-x { position: absolute; font-size: 12px; }
.ax-y { left: 6px; top: -5px; color: #3b7a3b; }
.ax-x { left: 39px; top: 31px; color: #b3343c; }
.view-name {
  position: absolute;
  left: 12px;
  bottom: 4px;
  font-family: Lato, sans-serif;
  font-size: 15px;
  font-weight: 700;
  color: #111;
}

/* sheet tabs */
.sheets { display: flex; flex: none; height: 16px; border-top: 1px solid var(--line); border-bottom: 1px solid var(--line); }
.steps { display: flex; width: 67px; padding-left: 2px; background: #a9a9a9; }
.steps button { flex: 1; display: grid; place-items: center; border-right: 1px solid #888; }
.steps svg { width: 11px; height: 11px; }
.sheet { padding-bottom: 2px; background: var(--tab); border-right: 1px solid var(--line); }
.sheet.on { width: 57px; padding-left: 3px; background: var(--chrome); font-weight: 700; }
.s3d { width: 68px; }
.smo { width: 108px; padding-right: 9px; }

/* status bar */
.status { display: flex; align-items: center; flex: none; height: 18px; }
.product { padding-left: 1px; margin-right: auto; }
.rebuild { width: 16px; height: 16px; margin: 0 82px 0 28px; }
.units { display: flex; align-items: center; gap: 25px; margin-right: 25px; }
.units i { border-bottom: 4px solid #333; border-left: 3px solid transparent; border-right: 3px solid transparent; }
.tag { width: 18px; height: 16px; margin-right: 2px; }

/* taskbar */
.taskbar { display: flex; flex: none; height: 30px; background: #202020; color: #fff; }
.tb { width: 37px; display: grid; place-items: center; flex: none; }
.tb svg { width: 18px; height: 18px; }
.task {
  display: flex;
  align-items: center;
  gap: 4px;
  width: 152px;
  margin: 0 5px 0 0;
  padding-left: 3px;
  border-bottom: 2px solid #76a9d6;
  white-space: nowrap;
}
.task svg { width: 18px; height: 18px; }
.chrome { margin-left: 5px; }
.active { width: 160px; padding-left: 6px; background: #4c4c4c; }
.sw-tiny { font-size: 7px; font-weight: 700; fill: #fff; text-anchor: middle; }
.tray { display: flex; align-items: center; margin-left: auto; }
.tray button { width: 24px; display: grid; place-items: center; }
.tray svg { width: 16px; height: 16px; }
.tray .lang { width: 37px; }
.clock { padding: 0 11px 0 9px; }
.edge { width: 1px; height: 30px; margin-right: 3px; background: #777; }
```
